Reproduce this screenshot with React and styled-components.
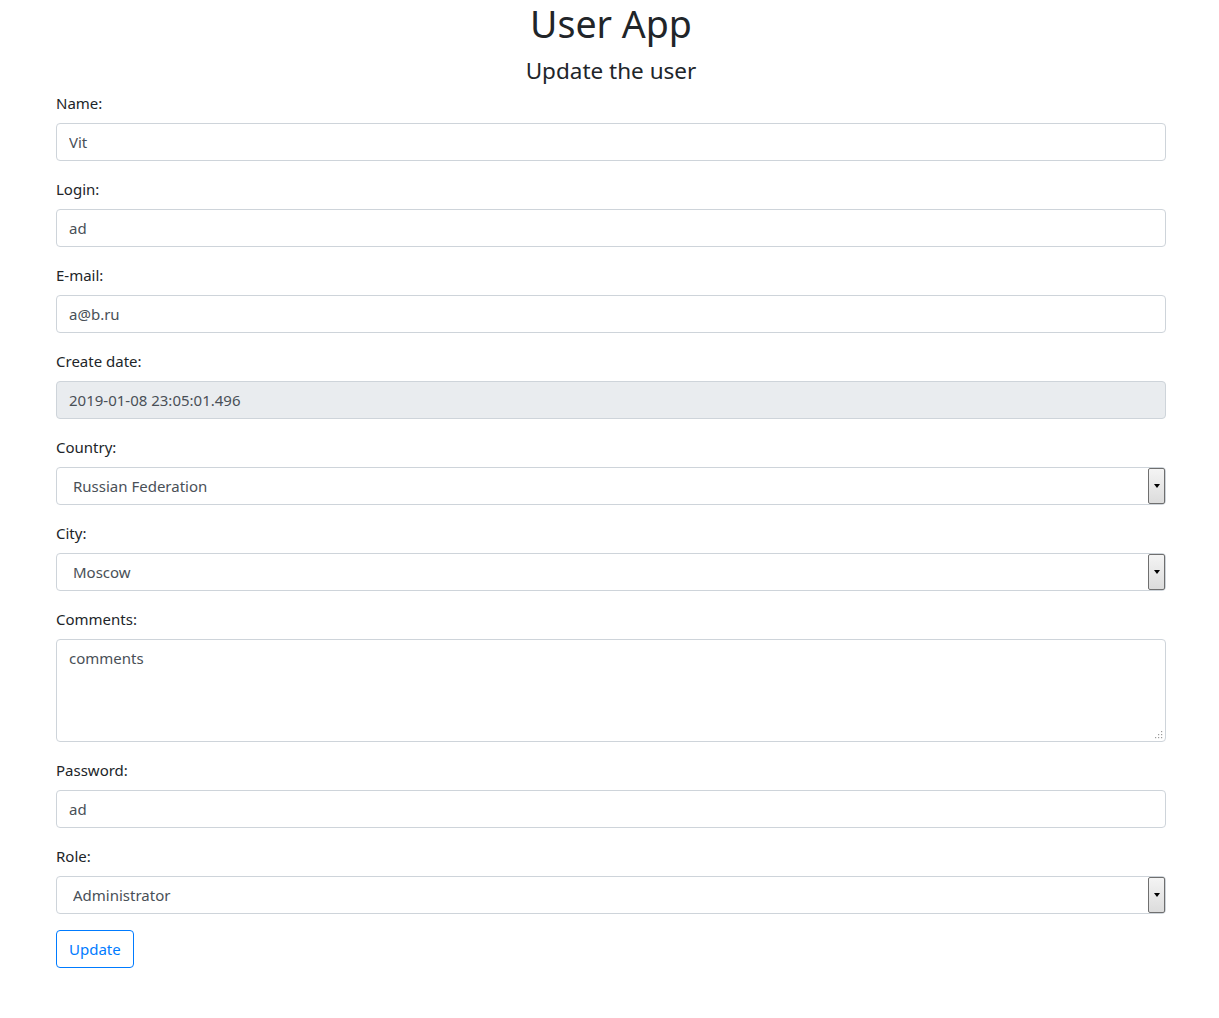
import React from "react";
import styled, { createGlobalStyle } from "styled-components";

const Global = createGlobalStyle`
  html, body { margin: 0; padding: 0; background: #fff; }
  body {
    font-family: "Noto Sans", "Segoe UI", sans-serif;
    font-size: 15px;
    line-height: 24px;
    color: #212529;
  }
  * { box-sizing: border-box; }
`;

const Container = styled.div`
  max-width: 1140px;
  margin: 0 auto;
  padding: 0 15px;
  position: relative;
  left: 1.5px;
`;

const Title = styled.h1`
  margin: 0 0 8px;
  font-size: 37.5px;
  font-weight: 400;
  line-height: 48px;
  text-align: center;
`;

const Subtitle = styled.h4`
  margin: 0 0 6px;
  font-size: 22.5px;
  font-weight: 400;
  line-height: 29px;
  text-align: center;
`;

const Group = styled.div`
  margin-bottom: 16px;
  display: flex;
  flex-direction: column;
`;

const Label = styled.label`
  display: block;
  margin-bottom: 8px;
`;

const Input = styled.input`
  display: block;
  width: 100%;
  height: 38px;
  padding: 6px 12px;
  font: inherit;
  color: #495057;
  background: ${(p) => (p.disabled ? "#e9ecef" : "#fff")};
  border: 1px solid #ced4da;
  border-radius: 4px;
  opacity: 1;
  -webkit-text-fill-color: #495057;
`;

const SelectWrap = styled.div`
  position: relative;
`;

const Select = styled.select`
  display: block;
  width: 100%;
  height: 38px;
  padding: 6px 12px 6px 16px;
  font: inherit;
  color: #495057;
  background: #fff;
  border: 1px solid #ced4da;
  border-radius: 4px;
  appearance: none;
  -webkit-appearance: none;
`;

const Arrow = styled.span`
  position: absolute;
  right: 1px;
  top: 1px;
  bottom: 1px;
  width: 17px;
  border: 1px solid #6f6f6f;
  border-radius: 2px;
  background: linear-gradient(#f4f4f4, #dcdcdc);
  display: flex;
  align-items: center;
  justify-content: center;
  pointer-events: none;
  &::after {
    content: "";
    border-left: 3.5px solid transparent;
    border-right: 3.5px solid transparent;
    border-top: 4px solid #000;
  }
`;

const TextAreaWrap = styled.div`
  position: relative;
`;

const TextArea = styled.textarea`
  display: block;
  width: 100%;
  height: 103px;
  padding: 6px 12px;
  font: inherit;
  color: #495057;
  background: #fff;
  border: 1px solid #ced4da;
  border-radius: 4px;
  resize: none;
`;

const Grip = styled.svg`
  position: absolute;
  right: 3px;
  bottom: 3px;
  width: 8px;
  height: 8px;
  pointer-events: none;
`;

const Button = styled.button`
  align-self: flex-start;
  height: 38px;
  padding: 6px 12px;
  font: inherit;
  color: #007bff;
  background: transparent;
  border: 1px solid #007bff;
  border-radius: 4px;
  cursor: pointer;
`;

const Field = ({ label, children }) => (
  <Group>
    <Label>{label}</Label>
    {children}
  </Group>
);

const SelectField = ({ label, value }) => (
  <Field label={label}>
    <SelectWrap>
      <Select defaultValue={value}>
        <option value={value}>{value}</option>
      </Select>
      <Arrow />
    </SelectWrap>
  </Field>
);

export default function App() {
  return (
    <>
      <Global />
      <Container>
        <Title>User App</Title>
        <Subtitle>Update the user</Subtitle>
        <form onSubmit={(e) => e.preventDefault()}>
          <Field label="Name:">
            <Input defaultValue="Vit" />
          </Field>
          <Field label="Login:">
            <Input defaultValue="ad" />
          </Field>
          <Field label="E-mail:">
            <Input defaultValue="a@b.ru" />
          </Field>
          <Field label="Create date:">
            <Input defaultValue="2019-01-08 23:05:01.496" disabled />
          </Field>
          <SelectField label="Country:" value="Russian Federation" />
          <SelectField label="City:" value="Moscow" />
          <Field label="Comments:">
            <TextAreaWrap>
              <TextArea defaultValue="comments" />
              <Grip viewBox="0 0 8 8">
                <g fill="#9a9a9a">
                  <rect x="6" y="0" width="1.2" height="1.2" />
                  <rect x="3" y="3" width="1.2" height="1.2" />
                  <rect x="6" y="3" width="1.2" height="1.2" />
                  <rect x="0" y="6" width="1.2" height="1.2" />
                  <rect x="3" y="6" width="1.2" height="1.2" />
                  <rect x="6" y="6" width="1.2" height="1.2" />
                </g>
              </Grip>
            </TextAreaWrap>
          </Field>
          <Field label="Password:">
            <Input defaultValue="ad" />
          </Field>
          <SelectField label="Role:" value="Administrator" />
          <Button type="submit">Update</Button>
        </form>
      </Container>
    </>
  );
}
